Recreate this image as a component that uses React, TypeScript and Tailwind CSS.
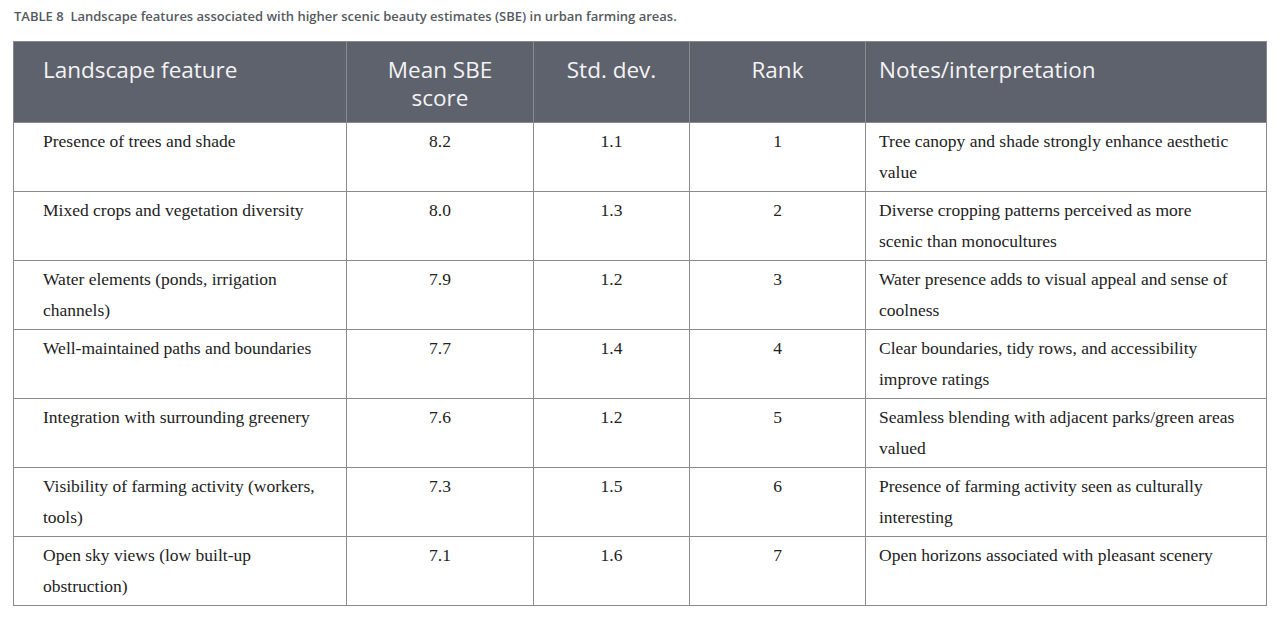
const rows = [
  ['Presence of trees and shade', '8.2', '1.1', '1', 'Tree canopy and shade strongly enhance aesthetic value'],
  ['Mixed crops and vegetation diversity', '8.0', '1.3', '2', 'Diverse cropping patterns perceived as more scenic than monocultures'],
  ['Water elements (ponds, irrigation channels)', '7.9', '1.2', '3', 'Water presence adds to visual appeal and sense of coolness'],
  ['Well-maintained paths and boundaries', '7.7', '1.4', '4', 'Clear boundaries, tidy rows, and accessibility improve ratings'],
  ['Integration with surrounding greenery', '7.6', '1.2', '5', 'Seamless blending with adjacent parks/green areas valued'],
  ['Visibility of farming activity (workers, tools)', '7.3', '1.5', '6', 'Presence of farming activity seen as culturally interesting'],
  ['Open sky views (low built-up obstruction)', '7.1', '1.6', '7', 'Open horizons associated with pleasant scenery'],
];

export default function App() {
  return (
    <div className="w-[1280px] h-[618px] bg-white px-[13px] pt-[8px]">
      <p className="pl-[1px] text-[13px] font-semibold leading-[16px] text-[#555a61] font-['Open_Sans',sans-serif]">
        TABLE 8&nbsp; Landscape features associated with higher scenic beauty estimates (SBE) in urban farming areas.
      </p>
      <table className="mt-[17px] w-[1253px] table-fixed border-collapse">
        <colgroup>
          <col className="w-[333px]" />
          <col className="w-[187px]" />
          <col className="w-[156px]" />
          <col className="w-[176px]" />
          <col className="w-[401px]" />
        </colgroup>
        <thead>
          <tr className="h-[81px] bg-[#5e626c] text-[#f3f3f5] font-['Open_Sans',sans-serif] text-[22.5px] leading-[28px]">
            <th className="align-top pt-[14px] pl-[29px] pr-[29px] text-left font-normal border border-[#8a8a8a]">Landscape feature</th>
            <th className="align-top pt-[14px] px-[30px] text-center font-normal border border-[#8a8a8a]">Mean SBE score</th>
            <th className="align-top pt-[14px] px-[14px] text-center font-normal border border-[#8a8a8a]">Std. dev.</th>
            <th className="align-top pt-[14px] px-[14px] text-center font-normal border border-[#8a8a8a]">Rank</th>
            <th className="align-top pt-[14px] px-[13px] text-left font-normal border border-[#8a8a8a]">Notes/interpretation</th>
          </tr>
        </thead>
        <tbody className="font-['Liberation_Serif',serif] text-[17.5px] leading-[31px] text-[#222]">
          {rows.map((r) => (
            <tr key={r[0]} className="h-[69px]">
              <td className="align-top pt-[3px] pl-[29px] pr-[26px] border border-[#8a8a8a]">{r[0]}</td>
              <td className="align-top pt-[3px] text-center border border-[#8a8a8a]">{r[1]}</td>
              <td className="align-top pt-[3px] text-center border border-[#8a8a8a]">{r[2]}</td>
              <td className="align-top pt-[3px] text-center border border-[#8a8a8a]">{r[3]}</td>
              <td className="align-top pt-[3px] pl-[13px] pr-[29px] border border-[#8a8a8a]">{r[4]}</td>
            </tr>
          ))}
        </tbody>
      </table>
    </div>
  );
}
